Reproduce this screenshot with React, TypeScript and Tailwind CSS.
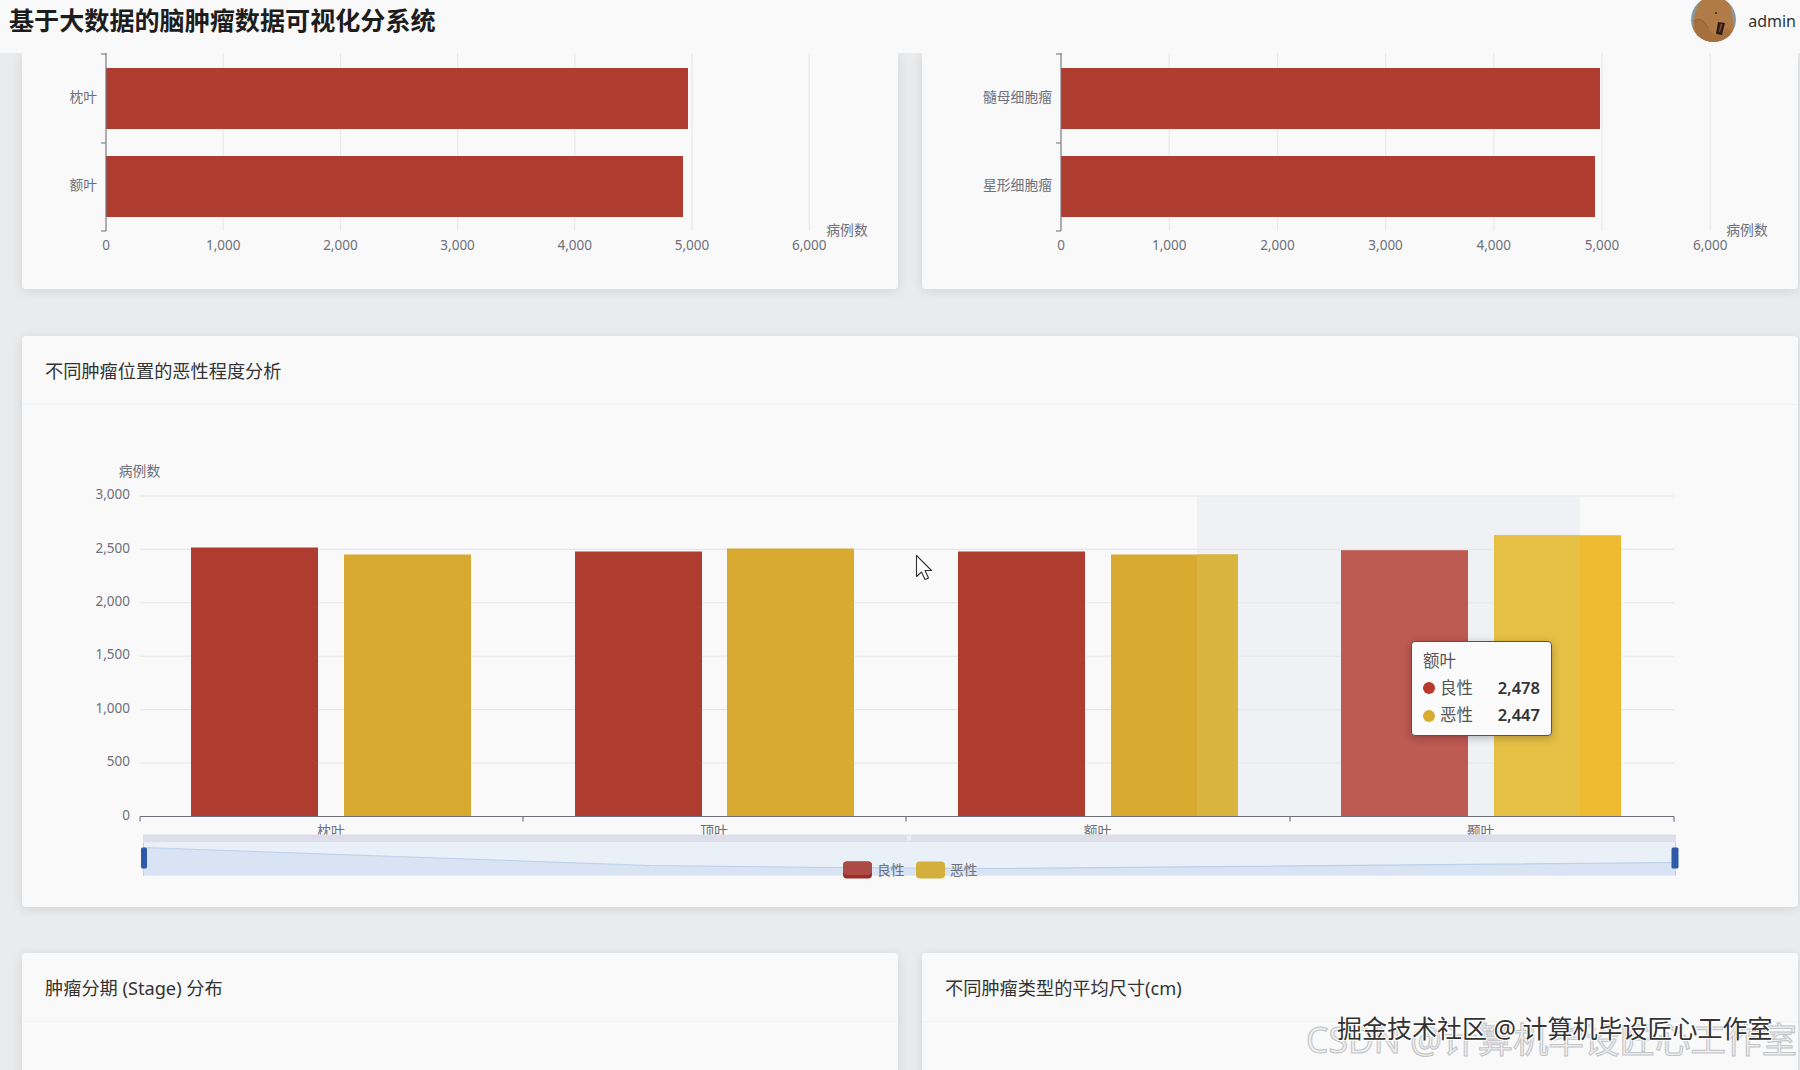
const RED = "#ae3d2f";
const GOLD = "#d8ab30";
const AXIS = "#6e7079";
const GRID = "#e6e7ea";

const SIDE_TICKS = [0, 1000, 2000, 3000, 4000, 5000, 6000];

type SideChartProps = {
  viewBox: string;
  axisX: number;
  step: number;
  axisNameX: number;
  rows: { label: string; top: number; right: number; labelY: number }[];
};

function SideChart({ viewBox, axisX, step, axisNameX, rows }: SideChartProps) {
  return (
    <svg viewBox={viewBox} className="block w-full h-full">
      {SIDE_TICKS.slice(1).map((t, i) => (
        <line key={t} x1={axisX + step * (i + 1)} x2={axisX + step * (i + 1)} y1={53} y2={231} stroke={GRID} strokeWidth={1.1} />
      ))}
      {rows.map((r) => (
        <rect key={r.label} x={axisX} y={r.top} width={r.right - axisX} height={61} fill={RED} />
      ))}
      <path d={`M${axisX} 53V231M${axisX - 5} 54H${axisX}M${axisX - 5} 143H${axisX}M${axisX - 5} 231H${axisX}`} stroke={AXIS} strokeWidth={1.1} fill="none" />
      {rows.map((r) => (
        <text key={r.label} x={axisX - 9} y={r.labelY} textAnchor="end" dominantBaseline="central" fontSize={13.8} fill={AXIS}>
          {r.label}
        </text>
      ))}
      {SIDE_TICKS.map((t, i) => (
        <text key={t} x={axisX + step * i} y={244.5} textAnchor="middle" dominantBaseline="central" fontSize={13.5} fill={AXIS}>
          {t.toLocaleString("en-US")}
        </text>
      ))}
      <text x={axisNameX} y={229} textAnchor="middle" dominantBaseline="central" fontSize={13.8} fill={AXIS}>
        病例数
      </text>
    </svg>
  );
}

const BAND_CHART = [
  { label: "枕叶", cx: 331, red: [191, 548], gold: [344, 555] },
  { label: "顶叶", cx: 714, red: [575, 552], gold: [727, 549] },
  { label: "额叶", cx: 1097.5, red: [958, 552], gold: [1111, 555] },
  { label: "颞叶", cx: 1480.5, red: [1341, 551], gold: [1494, 536] },
];

const Y_TICKS = [3000, 2500, 2000, 1500, 1000, 500, 0];

function LocationChart() {
  return (
    <svg viewBox="22 406 1776 501" className="block w-full h-full">
      {/* hover band */}
      <rect x={1197} y={497} width={383} height={320} fill="#eff1f4" />
      {Y_TICKS.slice(0, -1).map((t, i) => (
        <line key={t} x1={140} x2={1674} y1={496.5 + i * 53.4} y2={496.5 + i * 53.4} stroke={GRID} strokeWidth={1.1} />
      ))}
      {BAND_CHART.map((b) => (
        <g key={b.label}>
          <rect x={b.red[0]} y={b.red[1]} width={127} height={817 - b.red[1]} fill={RED} />
          <rect x={b.gold[0]} y={b.gold[1]} width={127} height={817 - b.gold[1]} fill={GOLD} />
        </g>
      ))}
      {/* band tints the bars under it */}
      <rect x={1197} y={555} width={41} height={262} fill="#d9b540" />
      <rect x={1341} y={551} width={127} height={266} fill="#bd5a52" />
      <rect x={1494} y={536} width={127} height={281} fill="#eebb30" />
      <rect x={1494} y={536} width={86} height={281} fill="#e6bf45" />
      <path d="M140 817H1674M140 817V822M523 817V822M906 817V822M1290 817V822M1674 817V822" stroke={AXIS} strokeWidth={1.1} fill="none" />
      {Y_TICKS.map((t, i) => (
        <text key={t} x={130} y={494.7 + i * 53.4} textAnchor="end" dominantBaseline="central" fontSize={13.5} fill={AXIS}>
          {t.toLocaleString("en-US")}
        </text>
      ))}
      <text x={139.5} y={470.5} textAnchor="middle" dominantBaseline="central" fontSize={13.8} fill={AXIS}>
        病例数
      </text>
      {BAND_CHART.map((b) => (
        <text key={b.label} x={b.cx} y={830.7} textAnchor="middle" dominantBaseline="central" fontSize={13.8} fill={AXIS}>
          {b.label}
        </text>
      ))}
      {/* data zoom */}
      <rect x={143} y={835} width={1533} height={8} fill="#dcdfe9" />
      <rect x={143} y={843} width={1533} height={33} fill="#e9f0f7" />
      <path d="M143 848L650 866L829 868L1000 869L1676 863V876H143Z" fill="#d8e3f4" />
      <path d="M143 848L650 866L829 868L1000 869L1676 863" stroke="#bccfeb" strokeWidth={1.1} fill="none" />
      <rect x={907} y={836} width={4} height={5} fill="#eceef3" />
      <line x1={143.5} x2={143.5} y1={843} y2={876} stroke="#bccfeb" />
      <line x1={1675.5} x2={1675.5} y1={843} y2={876} stroke="#bccfeb" />
      <rect x={141} y={848} width={6} height={21} rx={1.5} fill="#2d5ba8" />
      <rect x={1671.5} y={848} width={7} height={21} rx={1.5} fill="#2d5ba8" />
      {/* legend */}
      <rect x={843} y={862} width={29} height={17} rx={4} fill="#992d28" />
      <rect x={843} y={862} width={29} height={13.5} rx={4} fill="#ad4a45" />
      <rect x={916} y={862} width={29} height={17} rx={4} fill="#d2b03b" />
      <text x={877} y={869.5} dominantBaseline="central" fontSize={13.8} fill={AXIS}>
        良性
      </text>
      <text x={950} y={869.5} dominantBaseline="central" fontSize={13.8} fill={AXIS}>
        恶性
      </text>
      {/* mouse pointer */}
      <path d="M916.5 556V577L921.5 572.5L925 580L928.5 578.5L925 571H931.5Z" fill="#fff" stroke="#333" strokeWidth={1.1} strokeLinejoin="round" />
    </svg>
  );
}

function Tooltip() {
  return (
    <div className="absolute left-[1389px] top-[236px] w-[141px] h-[95px] rounded-[4px] border border-[#555] bg-[#fbfbfb] pl-[11px] pr-[11px] pt-[8px] shadow-[0_2px_8px_rgba(0,0,0,0.25)] text-[16.5px] text-[#555]">
      <div className="leading-[22px]">额叶</div>
      <div className="flex items-center h-[28px] mt-[2px]">
        <span className="w-[12px] h-[12px] rounded-full bg-[#b8382c] mr-[5px]" />
        <span>良性</span>
        <span className="ml-auto font-semibold text-[#333]">2,478</span>
      </div>
      <div className="flex items-center h-[27px]">
        <span className="w-[12px] h-[12px] rounded-full bg-[#d8ab30] mr-[5px]" />
        <span>恶性</span>
        <span className="ml-auto font-semibold text-[#333]">2,447</span>
      </div>
    </div>
  );
}

function Avatar() {
  return (
    <svg viewBox="0 0 45 45" className="w-[45px] h-[45px] rounded-full shrink-0 -mt-[3px]">
      <rect width="45" height="45" fill="#8a969c" />
      <path d="M2 45C0 30 4 10 12 0H35C41 10 44 28 42 45Z" fill="#b17b48" />
      <path d="M3 24C9 20 14 24 17 31C20 36 24 39 29 38L36 31L41 36L36 45H6Z" fill="#a66f3e" />
      <path d="M3 24C9 20 14 24 17 31" stroke="#84562f" strokeWidth="0.8" fill="none" />
      <circle cx="25" cy="16" r="1.1" fill="#3a2616" />
      <path d="M27 25L34 26L31 38L25 37Z" fill="#2d1a15" />
      <path d="M29.5 27L31.5 27L29 35L27.8 35Z" fill="#8a4a3a" />
    </svg>
  );
}

function CardHeader({ title }: { title: string }) {
  return (
    <div className="h-[69px] shrink-0 flex items-center pl-[23px] pt-[3px] border-b border-[#f1f2f3] text-[18.2px] text-[#333]">
      {title}
    </div>
  );
}

export default function App() {
  return (
    <div className="relative h-[1070px] overflow-hidden bg-[#e9ebed] font-['Noto_Sans','Noto_Sans_CJK_SC',sans-serif]">
      <header className="relative z-10 h-[53px] overflow-hidden flex items-center justify-between bg-[#f9f9fa] pl-[9px] pr-[4px] pb-[11px]">
        <h1 className="text-[25.1px] font-bold text-[#1d1d1d]">基于大数据的脑肿瘤数据可视化分系统</h1>
        <div className="flex items-center gap-[12px]">
          <Avatar />
          <span className="text-[16px] text-[#333]">admin</span>
        </div>
      </header>

      <main className="pl-[22px] pr-[2px]">
        <div className="grid grid-cols-2 gap-6 h-[236px]">
          <div className="rounded-b-[4px] bg-[#f9f9fa] shadow-[0_2px_12px_rgba(0,0,0,0.1)]">
            <SideChart
              viewBox="22 53 876 236"
              axisX={106}
              step={117.2}
              axisNameX={847}
              rows={[
                { label: "枕叶", top: 68, right: 688, labelY: 96 },
                { label: "额叶", top: 156, right: 683, labelY: 184.5 },
              ]}
            />
          </div>
          <div className="rounded-b-[4px] bg-[#f9f9fa] shadow-[0_2px_12px_rgba(0,0,0,0.1)]">
            <SideChart
              viewBox="922 53 876 236"
              axisX={1061}
              step={108.2}
              axisNameX={1747}
              rows={[
                { label: "髓母细胞瘤", top: 68, right: 1600, labelY: 96 },
                { label: "星形细胞瘤", top: 156, right: 1595, labelY: 184.5 },
              ]}
            />
          </div>
        </div>

        <section className="mt-[47px] h-[571px] flex flex-col rounded-[4px] bg-[#f9f9fa] shadow-[0_2px_12px_rgba(0,0,0,0.1)]">
          <CardHeader title="不同肿瘤位置的恶性程度分析" />
          <div className="relative flex-1 min-h-0">
            <LocationChart />
            <Tooltip />
          </div>
        </section>

        <div className="grid grid-cols-2 gap-6 mt-[46px]">
          <section className="h-[200px] rounded-[4px] bg-[#f9f9fa] shadow-[0_2px_12px_rgba(0,0,0,0.1)]">
            <CardHeader title="肿瘤分期 (Stage) 分布" />
          </section>
          <section className="h-[200px] rounded-[4px] bg-[#f9f9fa] shadow-[0_2px_12px_rgba(0,0,0,0.1)]">
            <CardHeader title="不同肿瘤类型的平均尺寸(cm)" />
          </section>
        </div>
      </main>

      {/* video watermarks */}
      <div className="absolute left-[1306px] top-[1016px] whitespace-nowrap text-[35.5px] leading-[46px] text-[#eeeeee] [-webkit-text-stroke:1px_#c2c4c7]">
        CSDN @计算机毕设匠心工作室
      </div>
      <div className="absolute left-[1337px] top-[1011px] whitespace-nowrap text-[25px] leading-[34px] text-[#333] [text-shadow:1px_1px_0_#fff,-1px_1px_0_#fff,1px_-1px_0_#fff,-1px_-1px_0_#fff]">
        掘金技术社区 @ 计算机毕设匠心工作室
      </div>
    </div>
  );
}
